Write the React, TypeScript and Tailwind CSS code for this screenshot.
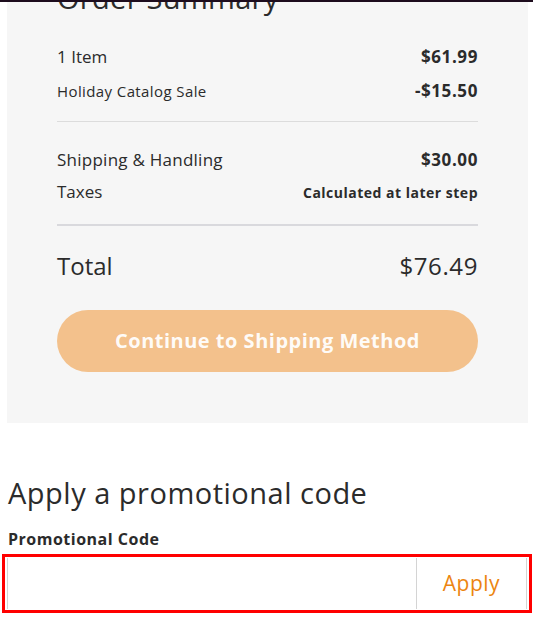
import React from "react";

export default function App() {
  return (
    <div className="w-[533px] h-[621px] bg-white overflow-hidden text-[#2b2b2b]" style={{ fontFamily: '"Open Sans", "Noto Sans", sans-serif' }}>
      <div className="h-[2px] bg-[#1d0c1d]" />
      <div className="ml-[7px] mr-[5px] bg-[#f6f6f6] overflow-hidden px-[50px] pb-[51px]">
        <h2 className="-mt-[21px] text-[29px] leading-[34px] font-normal tracking-[0.3px]">Order Summary</h2>
        <div className="mt-[25px] flex items-center justify-between h-[34px]">
          <span className="text-[17px]">1 Item</span>
          <span className="text-[17px] font-bold tracking-[0.6px]">$61.99</span>
        </div>
        <div className="flex items-center justify-between h-[34px]">
          <span className="text-[15px] tracking-[0.4px]">Holiday Catalog Sale</span>
          <span className="text-[17px] font-bold tracking-[0.6px]">-$15.50</span>
        </div>
        <div className="mt-[13px] h-px bg-[#dcdcdc]" />
        <div className="mt-[22px] flex items-center justify-between h-[32px]">
          <span className="text-[17px] tracking-[0.25px]">Shipping &amp; Handling</span>
          <span className="text-[17px] font-bold tracking-[0.6px]">$30.00</span>
        </div>
        <div className="flex items-center justify-between h-[32px]">
          <span className="text-[17px]">Taxes</span>
          <span className="text-[14px] font-bold tracking-[0.5px]">Calculated at later step</span>
        </div>
        <div className="mt-[16px] h-[2px] bg-[#d9d9dd]" />
        <div className="mt-[24px] flex items-center justify-between h-[32px]">
          <span className="text-[24px]">Total</span>
          <span className="text-[24px] tracking-[0.6px]">$76.49</span>
        </div>
        <button className="mt-[28px] w-full h-[62px] rounded-full bg-[#f3c18c] text-white/95 text-[20px] font-bold tracking-[0.5px] flex items-center justify-center">
          Continue to Shipping Method
        </button>
      </div>
      <div className="px-[8px]">
        <h3 className="mt-[52px] text-[29px] leading-[36px] font-normal tracking-[0.5px]">Apply a promotional code</h3>
        <div className="mt-[18px] text-[16px] leading-[20px] font-bold tracking-[0.5px]">Promotional Code</div>
      </div>
      <div className="mt-[5px] ml-[2px] w-[530px] h-[59px] border-[3px] border-[#ff0000] px-[2px] py-[1px] flex">
        <div className="flex-1 flex border-l border-r border-[#d4d4d4]">
          <input className="flex-1 h-full outline-none bg-transparent" />
          <button className="w-[110px] h-full border-l border-[#d4d4d4] text-[21px] tracking-[0.5px] text-[#ec8510] flex items-center justify-center">
            Apply
          </button>
        </div>
      </div>
    </div>
  );
}
